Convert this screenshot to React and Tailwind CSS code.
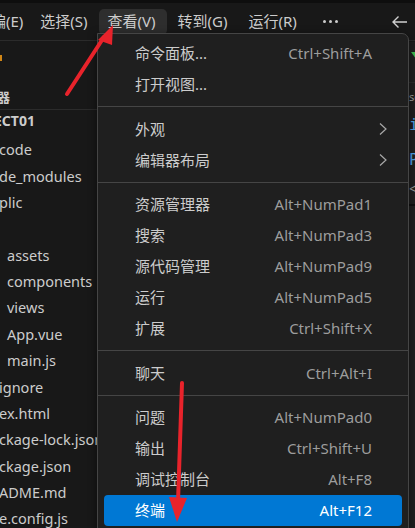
import React from "react";

const font = { fontFamily: '"Noto Sans", "Noto Sans CJK SC", sans-serif' };

const files = [
  { t: "code", x: 0 },
  { t: "de_modules", x: 0 },
  { t: "plic", x: 0 },
  { t: "", x: 0 },
  { t: "assets", x: 7 },
  { t: "components", x: 7 },
  { t: "views", x: 7 },
  { t: "App.vue", x: 7 },
  { t: "main.js", x: 7 },
  { t: "ignore", x: 0 },
  { t: "ex.html", x: 0 },
  { t: "ckage-lock.json", x: 0 },
  { t: "ckage.json", x: 0 },
  { t: "ADME.md", x: 0 },
  { t: "e.config.js", x: 0 },
];

const groups = [
  [
    { l: "命令面板...", k: "Ctrl+Shift+A" },
    { l: "打开视图...", k: "" },
  ],
  [
    { l: "外观", sub: true },
    { l: "编辑器布局", sub: true },
  ],
  [
    { l: "资源管理器", k: "Alt+NumPad1" },
    { l: "搜索", k: "Alt+NumPad3" },
    { l: "源代码管理", k: "Alt+NumPad9" },
    { l: "运行", k: "Alt+NumPad5" },
    { l: "扩展", k: "Ctrl+Shift+X" },
  ],
  [{ l: "聊天", k: "Ctrl+Alt+I" }],
  [
    { l: "问题", k: "Alt+NumPad0" },
    { l: "输出", k: "Ctrl+Shift+U" },
    { l: "调试控制台", k: "Alt+F8" },
    { l: "终端", k: "Alt+F12", active: true },
  ],
];

function Item({ it }) {
  return (
    <div
      className={`mx-[6px] h-[31px] flex items-center pl-[31px] pr-[30px] rounded-[4px] ${
        it.active ? "bg-[#0078d4] text-white" : "text-[#cccccc]"
      }`}
    >
      <span className="flex-1 text-[15px]">{it.l}</span>
      {it.sub ? (
        <svg width="10" height="14" viewBox="0 0 10 14" className="mr-[-16px]">
          <path d="M2 1.5 L8 7 L2 12.5" fill="none" stroke="#a8a8a8" strokeWidth="1.2" />
        </svg>
      ) : (
        <span className={`text-[15px] ${it.active ? "text-white" : "text-[#9d9d9d]"}`}>{it.k}</span>
      )}
    </div>
  );
}

export default function App() {
  return (
    <div className="relative w-[415px] h-[528px] overflow-hidden bg-[#181818]" style={font}>
      {/* title / menu bar */}
      <div className="h-[3px] bg-[#0e0e0e]" />
      <div className="h-[38px] flex items-center border-b border-[#2b2b2b] text-[#cccccc] text-[15px] bg-[#181818]">
        <div className="flex items-center ml-[-9px]">
          <span>编(E)</span>
          <span className="ml-[17px]">选择(S)</span>
          <span className="ml-[11px] h-[26px] w-[68px] pl-[9px] flex items-center rounded-[5px] bg-[#2e2e2e]">查看(V)</span>
          <span className="ml-[11px]">转到(G)</span>
          <span className="ml-[21px]">运行(R)</span>
          <span className="ml-[26px] flex gap-[3px] items-center">
            <span className="w-[3px] h-[3px] rounded-full bg-[#cccccc]" />
            <span className="w-[3px] h-[3px] rounded-full bg-[#cccccc]" />
            <span className="w-[3px] h-[3px] rounded-full bg-[#cccccc]" />
          </span>
        </div>
        <div className="flex-1" />
        <svg width="18" height="14" viewBox="0 0 18 14" className="mr-[6px]">
          <path d="M16 7 H2 M7.5 1.5 L2 7 L7.5 12.5" fill="none" stroke="#d0d0d0" strokeWidth="1.4" />
        </svg>
      </div>

      <div className="flex">
        {/* sidebar */}
        <div className="w-[97px] shrink-0 text-[#cccccc] text-[14.5px]">
          <div className="h-[39px] relative">
            <span className="absolute left-0 top-[14px] w-[2px] h-[6px] bg-[#d18616]" />
          </div>
          <div className="h-[30px] flex items-center font-bold text-[13px] border-b border-[#2b2b2b] ml-[-3px]">
            <span className="translate-y-[3px]">器</span>
          </div>
          <div className="h-[10px] flex items-end font-bold text-[14px] ml-[-6px] leading-none">
            <span className="translate-y-[8px]">ECT01</span>
          </div>
          <div className="pt-[17px]">
            {files.map((f, i) => (
              <div key={i} className="h-[26.36px] flex items-center whitespace-nowrap" style={{ paddingLeft: f.x }}>
                <span className={f.x ? "" : "ml-[-1px]"}>{f.t}</span>
              </div>
            ))}
          </div>
        </div>
        <div className="flex-1" />
      </div>

      {/* editor fragment on the right */}
      <div className="absolute left-[408px] top-[42px] w-[7px] h-[486px] bg-[#1f1f1f] overflow-hidden">
        <div className="absolute left-[3px] top-[10px] w-0 h-0 border-l-[5px] border-r-[5px] border-t-[7px] border-l-transparent border-r-transparent border-t-[#3fb950]" />
        <div className="absolute left-0 top-[40px] w-full h-px bg-[#2b2b2b]" />
        <div className="absolute left-[1px] top-[47px] text-[11px] text-[#9d9d9d]">sc</div>
        <div className="absolute left-[1px] top-[71px] text-[16px] text-[#4fa0e8]" style={{ fontFamily: '"DejaVu Sans Mono", monospace' }}>i</div>
        <div className="absolute left-[1px] top-[106px] text-[16px] text-[#4fa0e8]" style={{ fontFamily: '"DejaVu Sans Mono", monospace' }}>P</div>
        <div className="absolute left-[1px] top-[136px] text-[14px] text-[#9d9d9d]">&lt;</div>
        <div className="absolute left-0 top-[162px] w-full h-[2px] bg-[#0f0f0f]" />
      </div>

      {/* dropdown menu */}
      <div className="absolute left-[97px] top-[33px] w-[312px] h-[510px] bg-[#1f1f1f] border border-[#454545] rounded-tr-[7px] pt-[4px] shadow-[0_2px_8px_rgba(0,0,0,0.5)]">
        {groups.map((g, gi) => (
          <div key={gi}>
            {gi > 0 && <div className="h-px bg-[#454545] my-[6.25px]" />}
            {g.map((it, ii) => (
              <Item key={ii} it={it} />
            ))}
          </div>
        ))}
      </div>

      {/* red annotation arrows */}
      <svg className="absolute left-0 top-0 pointer-events-none" width="415" height="528" viewBox="0 0 415 528">
        <line x1="67" y1="94" x2="104" y2="37" stroke="#e8232b" strokeWidth="4" strokeLinecap="round" />
        <polygon points="113,25 98,40 112,45" fill="#e8232b" />
        <line x1="182" y1="383" x2="178" y2="502" stroke="#e8232b" strokeWidth="4" strokeLinecap="round" />
        <polygon points="169,497 187,498 177,522" fill="#e8232b" />
      </svg>
    </div>
  );
}
